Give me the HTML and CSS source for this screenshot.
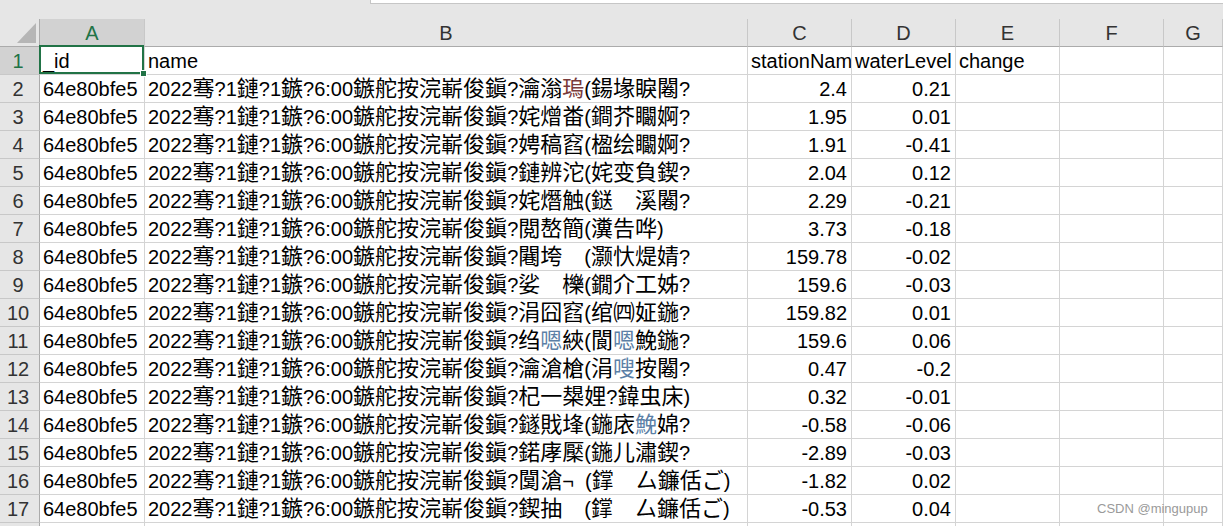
FILE: index.html
```html
<!DOCTYPE html>
<html lang="zh">
<head>
<meta charset="utf-8">
<title>Sheet</title>
<link rel="stylesheet" href="styles.css">
</head>
<body>
<div class="topbar"><div class="fx"></div></div>
<div class="sheet">
  <div class="corner"><svg class="tri" width="40" height="27" viewBox="0 0 40 27"><polygon points="36,4 36,24 17,24" fill="#b6b6b6"/></svg></div>
  <div class="ch on">A</div><div class="ch">B</div><div class="ch">C</div><div class="ch">D</div><div class="ch">E</div><div class="ch">F</div><div class="ch">G</div>

  <div class="rh on">1</div><div class="c sel">_id<span class="handle"></span></div><div class="c">name</div><div class="c">stationName</div><div class="c">waterLevel</div><div class="c">change</div><div class="c"></div><div class="c"></div>

  <div class="rh">2</div><div class="c">64e80bfe5</div><div class="c">2022<span class="z">骞</span>?1<span class="z">鏈</span>?1<span class="z">鏃</span>?6:00<span class="z">鏃舵按浣嶄俊鎭</span>?<span class="z">瀹滃<span class="pua2">瑦</span></span>(<span class="z">鍚堟睙闂</span>?</div><div class="c n">2.4</div><div class="c n">0.21</div><div class="c"></div><div class="c"></div><div class="c"></div>

  <div class="rh">3</div><div class="c">64e80bfe5</div><div class="c">2022<span class="z">骞</span>?1<span class="z">鏈</span>?1<span class="z">鏃</span>?6:00<span class="z">鏃舵按浣嶄俊鎭</span>?<span class="z">姹熷畨</span>(<span class="z">鐧芥矙婀</span>?</div><div class="c n">1.95</div><div class="c n">0.01</div><div class="c"></div><div class="c"></div><div class="c"></div>

  <div class="rh">4</div><div class="c">64e80bfe5</div><div class="c">2022<span class="z">骞</span>?1<span class="z">鏈</span>?1<span class="z">鏃</span>?6:00<span class="z">鏃舵按浣嶄俊鎭</span>?<span class="z">娉稿窞</span>(<span class="z">楹绘矙婀</span>?</div><div class="c n">1.91</div><div class="c n">-0.41</div><div class="c"></div><div class="c"></div><div class="c"></div>

  <div class="rh">5</div><div class="c">64e80bfe5</div><div class="c">2022<span class="z">骞</span>?1<span class="z">鏈</span>?1<span class="z">鏃</span>?6:00<span class="z">鏃舵按浣嶄俊鎭</span>?<span class="z">鏈辨沱</span>(<span class="z">姹变負鍥</span>?</div><div class="c n">2.04</div><div class="c n">0.12</div><div class="c"></div><div class="c"></div><div class="c"></div>

  <div class="rh">6</div><div class="c">64e80bfe5</div><div class="c">2022<span class="z">骞</span>?1<span class="z">鏈</span>?1<span class="z">鏃</span>?6:00<span class="z">鏃舵按浣嶄俊鎭</span>?<span class="z">姹熸触</span>(<span class="z">鎹　溪闂</span>?</div><div class="c n">2.29</div><div class="c n">-0.21</div><div class="c"></div><div class="c"></div><div class="c"></div>

  <div class="rh">7</div><div class="c">64e80bfe5</div><div class="c">2022<span class="z">骞</span>?1<span class="z">鏈</span>?1<span class="z">鏃</span>?6:00<span class="z">鏃舵按浣嶄俊鎭</span>?<span class="z">閲嶅簡</span>(<span class="z">瀵告哗</span>)</div><div class="c n">3.73</div><div class="c n">-0.18</div><div class="c"></div><div class="c"></div><div class="c"></div>

  <div class="rh">8</div><div class="c">64e80bfe5</div><div class="c">2022<span class="z">骞</span>?1<span class="z">鏈</span>?1<span class="z">鏃</span>?6:00<span class="z">鏃舵按浣嶄俊鎭</span>?<span class="z">闀垮　</span>(<span class="z">灏忕煶婧</span>?</div><div class="c n">159.78</div><div class="c n">-0.02</div><div class="c"></div><div class="c"></div><div class="c"></div>

  <div class="rh">9</div><div class="c">64e80bfe5</div><div class="c">2022<span class="z">骞</span>?1<span class="z">鏈</span>?1<span class="z">鏃</span>?6:00<span class="z">鏃舵按浣嶄俊鎭</span>?<span class="z">娑　櫟</span>(<span class="z">鐗介工姊</span>?</div><div class="c n">159.6</div><div class="c n">-0.03</div><div class="c"></div><div class="c"></div><div class="c"></div>

  <div class="rh">10</div><div class="c">64e80bfe5</div><div class="c">2022<span class="z">骞</span>?1<span class="z">鏈</span>?1<span class="z">鏃</span>?6:00<span class="z">鏃舵按浣嶄俊鎭</span>?<span class="z">涓囧窞</span>(<span class="z">绾㈣姃鍦</span>?</div><div class="c n">159.82</div><div class="c n">0.01</div><div class="c"></div><div class="c"></div><div class="c"></div>

  <div class="rh">11</div><div class="c">64e80bfe5</div><div class="c">2022<span class="z">骞</span>?1<span class="z">鏈</span>?1<span class="z">鏃</span>?6:00<span class="z">鏃舵按浣嶄俊鎭</span>?<span class="z">绉<span class="pua">嗯</span>綊</span>(<span class="z">閬<span class="pua">嗯</span>鮸鍦</span>?</div><div class="c n">159.6</div><div class="c n">0.06</div><div class="c"></div><div class="c"></div><div class="c"></div>

  <div class="rh">12</div><div class="c">64e80bfe5</div><div class="c">2022<span class="z">骞</span>?1<span class="z">鏈</span>?1<span class="z">鏃</span>?6:00<span class="z">鏃舵按浣嶄俊鎭</span>?<span class="z">瀹滄槍</span>(<span class="z">涓<span class="pua">嗖</span>按闂</span>?</div><div class="c n">0.47</div><div class="c n">-0.2</div><div class="c"></div><div class="c"></div><div class="c"></div>

  <div class="rh">13</div><div class="c">64e80bfe5</div><div class="c">2022<span class="z">骞</span>?1<span class="z">鏈</span>?1<span class="z">鏃</span>?6:00<span class="z">鏃舵按浣嶄俊鎭</span>?<span class="z">杞一槼娌</span>?<span class="z">鍏虫床</span>)</div><div class="c n">0.32</div><div class="c n">-0.01</div><div class="c"></div><div class="c"></div><div class="c"></div>

  <div class="rh">14</div><div class="c">64e80bfe5</div><div class="c">2022<span class="z">骞</span>?1<span class="z">鏈</span>?1<span class="z">鏃</span>?6:00<span class="z">鏃舵按浣嶄俊鎭</span>?<span class="z">鐩戝埄</span>(<span class="z">鍦庡<span class="pua">鮸</span>婂</span>?</div><div class="c n">-0.58</div><div class="c n">-0.06</div><div class="c"></div><div class="c"></div><div class="c"></div>

  <div class="rh">15</div><div class="c">64e80bfe5</div><div class="c">2022<span class="z">骞</span>?1<span class="z">鏈</span>?1<span class="z">鏃</span>?6:00<span class="z">鏃舵按浣嶄俊鎭</span>?<span class="z">鍩庨檿</span>(<span class="z">鍦儿潚鍥</span>?</div><div class="c n">-2.89</div><div class="c n">-0.03</div><div class="c"></div><div class="c"></div><div class="c"></div>

  <div class="rh">16</div><div class="c">64e80bfe5</div><div class="c">2022<span class="z">骞</span>?1<span class="z">鏈</span>?1<span class="z">鏃</span>?6:00<span class="z">鏃舵按浣嶄俊鎭</span>?<span class="z">闅滄</span>¬&nbsp;&nbsp;(<span class="z">鐣　厶鐮佸ご</span>)</div><div class="c n">-1.82</div><div class="c n">0.02</div><div class="c"></div><div class="c"></div><div class="c"></div>

  <div class="rh">17</div><div class="c">64e80bfe5</div><div class="c">2022<span class="z">骞</span>?1<span class="z">鏈</span>?1<span class="z">鏃</span>?6:00<span class="z">鏃舵按浣嶄俊鎭</span>?<span class="z">鍥抽　</span>(<span class="z">鐣　厶鐮佸ご</span>)</div><div class="c n">-0.53</div><div class="c n">0.04</div><div class="c"></div><div class="c"></div><div class="c"></div>

  <div class="rh">18</div><div class="c"></div><div class="c"></div><div class="c"></div><div class="c"></div><div class="c"></div><div class="c"></div><div class="c"></div>
</div>
<div class="mark">CSDN @mingupup</div>
</body>
</html>
```

FILE: styles.css
```css
html, body {
  margin: 0;
  padding: 0;
}
body {
  width: 1223px;
  height: 526px;
  overflow: hidden;
  position: relative;
  background: #ffffff;
  font-family: "Liberation Sans", "Noto Sans CJK SC", sans-serif;
  color: #000;
}
.topbar {
  height: 19px;
  background: #e6e6e6;
}
.fx {
  margin-left: 370px;
  height: 3px;
  background: #ffffff;
  border-left: 1px solid #c6c6c6;
  border-bottom: 1px solid #c6c6c6;
}
.sheet {
  display: grid;
  grid-template-columns: 40px 105px 603px 104px 104px 104px 104px 1fr;
  grid-auto-rows: 28px;
}
.sheet > div {
  box-sizing: border-box;
  overflow: hidden;
  white-space: nowrap;
  font-size: 20px;
  line-height: 26px;
  padding-top: 1px;
}
.corner {
  background: #e6e6e6;
  border-right: 1px solid #ababab;
  border-bottom: 1px solid #ababab;
}
.tri {
  display: block;
  margin-top: -1px;
}
.ch {
  background: #e6e6e6;
  border-right: 1px solid #c8c8c8;
  border-bottom: 1px solid #ababab;
  text-align: center;
  color: #333;
}
.rh {
  background: #e6e6e6;
  border-right: 1px solid #ababab;
  border-bottom: 1px solid #c8c8c8;
  text-align: center;
  padding-right: 3px;
  color: #333;
}
.ch.on, .rh.on {
  background: #d2d2d2;
  color: #217346;
}
.c {
  border-right: 1px solid #d4d4d4;
  border-bottom: 1px solid #d4d4d4;
  padding-left: 3px;
  padding-right: 4px;
}
.n {
  text-align: right;
}
.z {
  font-family: "Noto Sans CJK SC", sans-serif;
  font-size: 22px;
  line-height: 20px;
}
.pua {
  color: #5b7fa6;
}
.pua2 {
  color: #7a3b3b;
}
.sheet > .sel {
  position: relative;
  overflow: visible;
}
.sel::after {
  content: "";
  position: absolute;
  left: -1px;
  top: -2px;
  right: 0;
  bottom: 0;
  border: 2px solid #217346;
  pointer-events: none;
}
.handle {
  position: absolute;
  right: -3px;
  bottom: -3px;
  width: 5px;
  height: 5px;
  background: #217346;
  border: 1px solid #ffffff;
  z-index: 2;
}
.mark {
  position: absolute;
  left: 1097px;
  top: 502px;
  font-size: 13px;
  line-height: 13px;
  color: #9a9a9a;
  font-family: "Liberation Sans", sans-serif;
}
```
